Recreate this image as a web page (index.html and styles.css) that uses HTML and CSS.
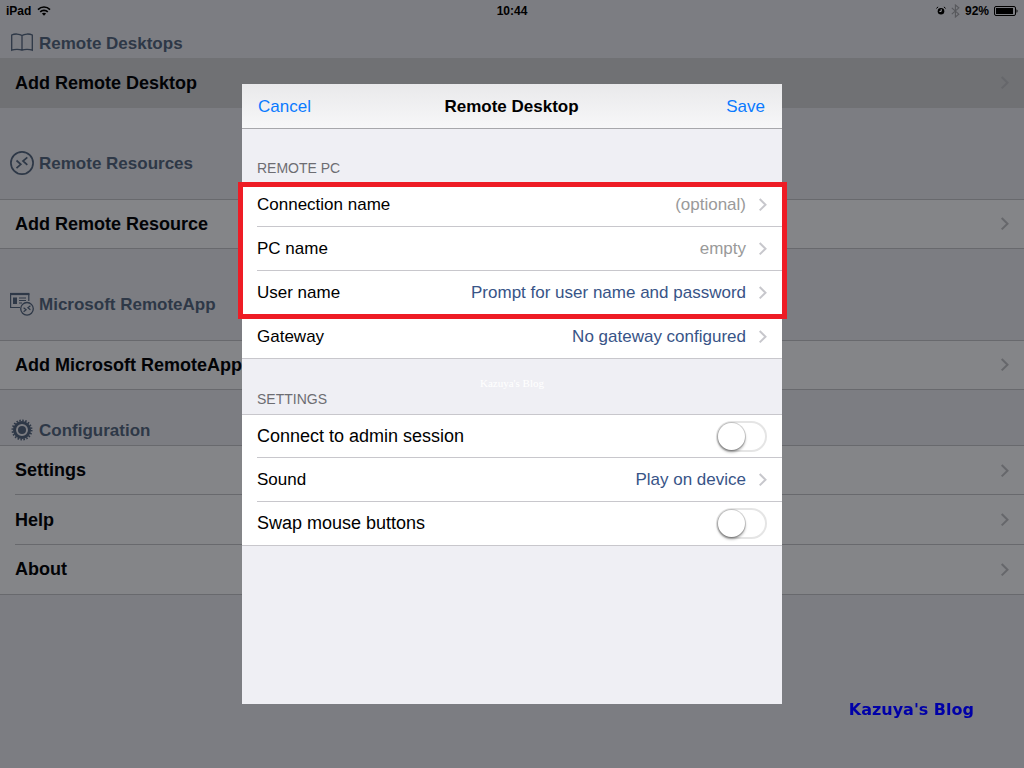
FILE: index.html
```
<!DOCTYPE html>
<html lang="en">
<head>
  <meta charset="UTF-8" />
  <meta name="viewport" content="width=device-width, initial-scale=1.0" />
  <title>Remote Desktop</title>
  <link rel="stylesheet" href="styles.css">
</head>
<body>
<svg class="sprites" aria-hidden="true">
  <symbol id="chevron" viewBox="0 0 9 14">
    <path d="M1.700 1L7.500 6.700l-5.800 5.700" fill="none" stroke="currentColor" stroke-width="2" />
  </symbol>
</svg>

<header class="status-bar">
  <div class="status-left">
    <span>iPad</span>
    <svg width="14" height="10" viewBox="0 0 14 10" fill="none" stroke="#000" stroke-width="1.6">
      <path d="M1 3.6C4.3.2 9.7.2 13 3.6" />
      <path d="M3.2 5.9c2.1-2.1 5.5-2.1 7.6 0" />
      <path d="M7 9.8L4.9 7.6c1.2-1 3-1 4.2 0z" fill="#000" stroke="none" />
    </svg>
  </div>
  <span>10:44</span>
  <div class="status-right">
    <svg width="10" height="10" viewBox="0 0 10 10">
      <circle cx="5" cy="5.2" r="3.3" />
      <path d="M.4 2.4L2.1.9M9.6 2.4L7.900.9" stroke="#000" stroke-width="1" />
      <path d="M5.2 3.2v2.200H3.400" fill="none" stroke="#a0a1a6" stroke-width="1" />
    </svg>
    <svg width="9" height="14" viewBox="0 0 9 14" fill="none" stroke="#57585c" stroke-width="1.1">
      <path d="M.8 3.8l7 6.400L4.400 13V1l3.400 2.800-7 6.400" />
    </svg>
    <span>92%</span>
    <svg width="24" height="10" viewBox="0 0 24 10">
      <rect x=".5" y=".5" width="21" height="9" rx="1.5" fill="none" stroke="#000" />
      <rect x="2" y="2" width="17" height="6" />
      <path d="M22.500 3.200c1.400.4 1.400 3.200 0 3.600z" />
    </svg>
  </div>
</header>

<main>
  <h2 class="group-title">
    <svg width="24" height="24" viewBox="0 0 24 24" fill="none" stroke="currentColor">
      <path d="M12 4.6C9.500 2.600 4.500 2.600 1.700 4v15.200c2.800-1.200 7.800-1.200 10.300 0 2.500-1.200 7.500-1.200 10.300 0V4c-2.800-1.400-7.800-1.400-10.300.6zv14" stroke-width="1.300" />
    </svg>
    Remote Desktops
  </h2>
  <div class="group">
    <button class="item selected">Add Remote Desktop <svg class="chevron"><use href="#chevron" /></svg></button>
  </div>

  <h2 class="group-title tall">
    <svg width="24" height="24" viewBox="0 0 24 24" fill="none" stroke="currentColor" stroke-width="1.7">
      <circle cx="12" cy="12" r="11.1" />
      <path d="M6.500 9.500l4.300 3.800-4.300 3.900M17.300 6.300L13 10l4.300 3.800" />
    </svg>
    Remote Resources
  </h2>
  <div class="group">
    <button class="item">Add Remote Resource <svg class="chevron"><use href="#chevron" /></svg></button>
  </div>

  <h2 class="group-title tall">
    <svg width="24" height="24" viewBox="0 0 24 24" fill="none" stroke="currentColor">
      <path d="M10 15.500H.6V2h18.200v7" stroke-width="1.2" />
      <path d="M0 2h19.400" stroke-width="2.2" />
      <path d="M9 6h7M9 8.500h7M9 11h3" stroke-width="1.100" />
      <path d="M3 5.500h4v6.500H3z" fill="currentColor" stroke="none" />
      <circle cx="17" cy="16.800" r="6.300" stroke-width="1.300" />
      <path d="M13.600 15.800l2.500 2-2.500 2M20.400 13.800l-2.500 2 2.500 2" stroke-width="1.200" />
    </svg>
    Microsoft RemoteApp
  </h2>
  <div class="group">
    <button class="item">Add Microsoft RemoteApp <svg class="chevron"><use href="#chevron" /></svg></button>
  </div>

  <h2 class="group-title short">
    <svg width="24" height="24" viewBox="0 0 24 24" fill="none" stroke="currentColor">
      <circle cx="12" cy="12" r="9.500" stroke-width="2" stroke-dasharray="1.500 1.484" />
      <circle cx="12" cy="12" r="7.500" stroke-width="3" />
      <circle cx="12" cy="12" r="4" fill="currentColor" stroke="none" />
    </svg>
    Configuration
  </h2>
  <div class="group">
    <button class="item">Settings <svg class="chevron"><use href="#chevron" /></svg></button>
    <button class="item">Help <svg class="chevron"><use href="#chevron" /></svg></button>
    <button class="item">About <svg class="chevron"><use href="#chevron" /></svg></button>
  </div>
</main>

<div class="blog-mark">Kazuya's Blog</div>

<div class="backdrop">
  <div class="dialog" role="dialog" aria-labelledby="dialogTitle">
    <div class="nav-bar">
      <button class="nav-button" type="button">Cancel</button>
      <h1 id="dialogTitle">Remote Desktop</h1>
      <button class="nav-button save" type="button">Save</button>
    </div>

    <h3 class="section-title">REMOTE PC</h3>
    <div class="cells">
      <button class="cell" type="button">
        <span class="cell-body">Connection name <span class="value empty">(optional)</span> <svg class="chevron"><use href="#chevron" /></svg></span>
      </button>
      <button class="cell" type="button">
        <span class="cell-body">PC name <span class="value empty">empty</span> <svg class="chevron"><use href="#chevron" /></svg></span>
      </button>
      <button class="cell" type="button">
        <span class="cell-body">User name <span class="value">Prompt for user name and password</span> <svg class="chevron"><use href="#chevron" /></svg></span>
      </button>
      <button class="cell" type="button">
        <span class="cell-body">Gateway <span class="value">No gateway configured</span> <svg class="chevron"><use href="#chevron" /></svg></span>
      </button>
      <div class="highlight"></div>
    </div>

    <div class="section-break">
      <span class="small-mark">Kazuya's Blog</span>
      <h3 class="section-title">SETTINGS</h3>
    </div>
    <div class="cells">
      <div class="cell">
        <div class="cell-body large">
          <label for="admin">Connect to admin session</label>
          <input class="switch" type="checkbox" role="switch" id="admin">
        </div>
      </div>
      <button class="cell" type="button">
        <span class="cell-body">Sound <span class="value">Play on device</span> <svg class="chevron"><use href="#chevron" /></svg></span>
      </button>
      <div class="cell">
        <div class="cell-body large">
          <label for="swap">Swap mouse buttons</label>
          <input class="switch" type="checkbox" role="switch" id="swap">
        </div>
      </div>
    </div>
  </div>
</div>
</body>
</html>
```
FILE: styles.css
```
* {
  box-sizing: border-box;
}

body {
  margin: 0;
  min-height: 100vh;
  background-color: #7c7d82;
  color: #020306;
  font-family: "Liberation Sans", Arial, sans-serif;
}

h1,
h2,
h3 {
  margin: 0;
}

button {
  border: 0;
  padding: 0;
  background: none;
  color: inherit;
  font: inherit;
  text-align: left;
  cursor: pointer;
}

.sprites {
  display: none;
}

/* status bar */
.status-bar {
  display: grid;
  grid-template-columns: 1fr auto 1fr;
  align-items: center;
  height: 22px;
  padding: 0 6px;
  color: #000;
  font-size: 12px;
  font-weight: bold;
}

.status-left,
.status-right {
  display: flex;
  align-items: center;
  gap: 6px;
}

.status-right {
  justify-content: flex-end;
  gap: 5px;
}

/* page list */
.group-title {
  display: flex;
  align-items: flex-end;
  gap: 5px;
  height: 36px;
  padding: 0 10px 3px;
  color: #2e3847;
  font-size: 17px;
  line-height: 22px;
}

.group-title.tall {
  height: 91px;
  padding-bottom: 24px;
}

.group-title.short {
  height: 55px;
}

.group {
  background-color: #848588;
}

.item {
  position: relative;
  display: flex;
  align-items: center;
  justify-content: space-between;
  width: 100%;
  height: 50px;
  padding: 0 15px;
  font-size: 18px;
  font-weight: bold;
}

.item:first-child {
  border-top: 1px solid #68696d;
}

.item:last-child {
  border-bottom: 1px solid #68696d;
}

/* separators between items start at the text */
.item:not(:last-child)::after {
  content: "";
  position: absolute;
  left: 15px;
  right: 0;
  bottom: 0;
  height: 1px;
  background-color: #68696d;
}

.item.selected {
  border: 0;
  background-color: #707174;
}

.chevron {
  flex: none;
  width: 9px;
  height: 14px;
  color: #c7c7cc;
}

.item .chevron {
  color: #66676b;
}

.blog-mark {
  position: fixed;
  right: 50px;
  bottom: 49px;
  color: #0000a8;
  font: bold 16px/18px "DejaVu Sans", Verdana, sans-serif;
}

/* dialog */
.backdrop {
  position: fixed;
  inset: 0;
  display: flex;
  align-items: center;
  justify-content: center;
  padding-top: 20px;
}

.dialog {
  width: 540px;
  max-width: 100%;
  min-height: 620px;
  background-color: #efeff4;
  color: #000;
  font-size: 17px;
}

.nav-bar {
  display: grid;
  grid-template-columns: 1fr auto 1fr;
  align-items: center;
  height: 45px;
  padding: 2px 17px 0 16px;
  border-bottom: 1px solid #a7a7ab;
  background: linear-gradient(#e9e9eb, #f7f7f8);
}

.nav-bar h1 {
  font-size: 17px;
}

.nav-button {
  color: #0a7aff;
}

.nav-button.save {
  text-align: right;
}

.section-title {
  height: 54px;
  padding: 30px 15px 0;
  color: #6d6d72;
  font-size: 14px;
  font-weight: normal;
  line-height: 18px;
}

.section-break {
  position: relative;
  height: 55px;
}

.small-mark {
  position: absolute;
  top: 18px;
  left: 0;
  right: 0;
  color: #fff;
  font: 11px/13px "Liberation Serif", "Times New Roman", serif;
  text-align: center;
}

.section-break .section-title {
  height: 55px;
  padding-top: 31px;
}

.cells {
  position: relative;
  background-color: #fff;
}

.cell {
  display: block;
  width: 100%;
  height: 44px;
  padding-left: 15px;
}

.cell:first-child {
  border-top: 1px solid #c8c7cc;
}

.cell-body {
  display: flex;
  align-items: center;
  gap: 12px;
  height: 100%;
  padding-right: 15px;
  border-bottom: 1px solid #c8c7cc;
}

.cell:nth-child(4),
.cell:last-child {
  border-bottom: 1px solid #c8c7cc;
}

.cell:nth-child(4) .cell-body,
.cell:last-child .cell-body {
  border-bottom: 0;
}

.cell-body.large {
  justify-content: space-between;
  font-size: 18px;
}

.value {
  margin-left: auto;
  color: #385487;
}

.value.empty {
  color: #9a9a9a;
}

.highlight {
  position: absolute;
  top: -1px;
  left: -4px;
  right: -5px;
  height: 137px;
  border: 5px solid #ee1c25;
  pointer-events: none;
}

.switch {
  appearance: none;
  flex: none;
  width: 51px;
  height: 31px;
  margin: 0;
  border: 2px solid #e5e5e5;
  border-radius: 16px;
  background-color: #fff;
  cursor: pointer;
}

.switch::before {
  content: "";
  display: block;
  width: 27px;
  height: 27px;
  border-radius: 50%;
  background-color: #fff;
  box-shadow: 0 0 0 1px rgba(0, 0, 0, 0.15), 0 2px 3px rgba(0, 0, 0, 0.4);
}

.switch:checked {
  border-color: #4cd964;
  background-color: #4cd964;
}

.switch:checked::before {
  margin-left: 20px;
}
```
